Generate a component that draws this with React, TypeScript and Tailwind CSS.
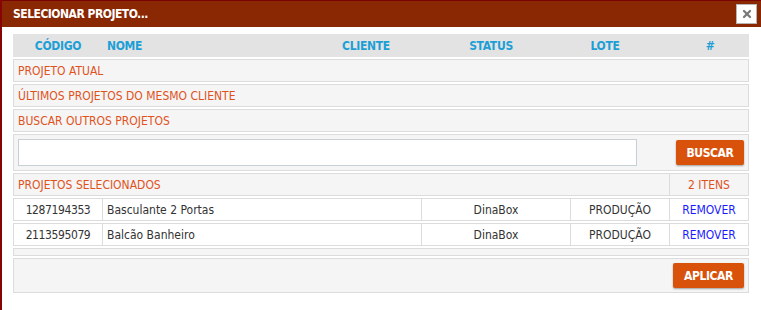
import { X } from 'lucide-react';

const selected = [
  { code: '1287194353', name: 'Basculante 2 Portas', client: 'DinaBox', status: 'PRODUÇÃO' },
  { code: '2113595079', name: 'Balcão Banheiro', client: 'DinaBox', status: 'PRODUÇÃO' },
];

const sections = ['PROJETO ATUAL', 'ÚLTIMOS PROJETOS DO MESMO CLIENTE', 'BUSCAR OUTROS PROJETOS'];

export default function App() {
  return (
    <div className="w-[761px] h-[310px] bg-white border-l-2 border-[#860404] font-['DejaVu_Sans_Condensed','DejaVu_Sans',sans-serif] font-stretch-condensed text-[12px] leading-none overflow-hidden">
      {/* Title bar */}
      <div className="h-[27px] bg-[#8a2804] border-t border-[#7a0303] flex items-center pl-[11px] pr-[4px]">
        <span className="text-white font-bold text-[12px] tracking-[-0.5px]">SELECIONAR PROJETO...</span>
        <button className="ml-auto w-[21px] h-[20px] bg-white border border-[#b5b5b5] flex items-center justify-center">
          <X className="w-[12px] h-[12px] text-[#7a7a7a]" strokeWidth={4.5} />
        </button>
      </div>

      {/* Content */}
      <div className="pt-[7px] pl-[11px] w-[747px] flex flex-col gap-[2px]">
        {/* Header */}
        <div className="h-[23px] bg-[#e3e3e3] flex items-center font-bold text-[#1d9fd6] tracking-[-0.3px]">
          <div className="w-[90px] text-center">CÓDIGO</div>
          <div className="w-[208px] pl-[4px]">NOME</div>
          <div className="w-[110px] text-center">CLIENTE</div>
          <div className="w-[140px] text-center">STATUS</div>
          <div className="w-[88px] text-center">LOTE</div>
          <div className="flex-1" />
          <div className="w-[78px] text-center">#</div>
        </div>

        {sections.map((s) => (
          <div key={s} className="h-[23px] bg-[#f5f5f5] border border-[#dcdcdc] flex items-center pl-[4px] text-[#e0521c]">
            {s}
          </div>
        ))}

        {/* Search row */}
        <div className="h-[37px] bg-[#f5f5f5] border border-[#dcdcdc] flex items-center pl-[4px] pr-[4px]">
          <input className="w-[619px] h-[27px] bg-white border border-[#c6d0d5] outline-none px-2" />
          <button className="ml-auto w-[68px] h-[25px] bg-[#d9520b] rounded-[2px] shadow-[0_1px_2px_rgba(0,0,0,0.35)] text-white font-bold tracking-[-0.4px]">
            BUSCAR
          </button>
        </div>

        {/* Selected header */}
        <div className="h-[23px] bg-[#f5f5f5] border border-[#dcdcdc] flex text-[#e0521c]">
          <div className="flex-1 flex items-center pl-[4px]">PROJETOS SELECIONADOS</div>
          <div className="w-[79px] border-l border-[#dcdcdc] flex items-center justify-center">2 ITENS</div>
        </div>

        {selected.map((p) => (
          <div key={p.code} className="h-[23px] bg-white border border-[#dcdcdc] flex text-[#333]">
            <div className="w-[88px] flex items-center justify-center tracking-[-0.4px]">{p.code}</div>
            <div className="w-[319px] border-l border-[#dcdcdc] flex items-center pl-[4px]">{p.name}</div>
            <div className="w-[149px] border-l border-[#dcdcdc] flex items-center justify-center">{p.client}</div>
            <div className="w-[99px] border-l border-[#dcdcdc] flex items-center justify-center">{p.status}</div>
            <div className="flex-1 border-l border-[#dcdcdc] flex items-center justify-center text-[#1a1aff]">REMOVER</div>
          </div>
        ))}

        <div className="h-[8px] bg-[#f5f5f5] border border-[#dcdcdc]" />

        {/* Footer */}
        <div className="h-[35px] bg-[#f5f5f5] border border-[#dcdcdc] flex items-center justify-end pr-[4px]">
          <button className="w-[71px] h-[25px] bg-[#d9520b] rounded-[2px] shadow-[0_1px_2px_rgba(0,0,0,0.35)] text-white font-bold tracking-[-0.4px]">
            APLICAR
          </button>
        </div>
      </div>
    </div>
  );
}
